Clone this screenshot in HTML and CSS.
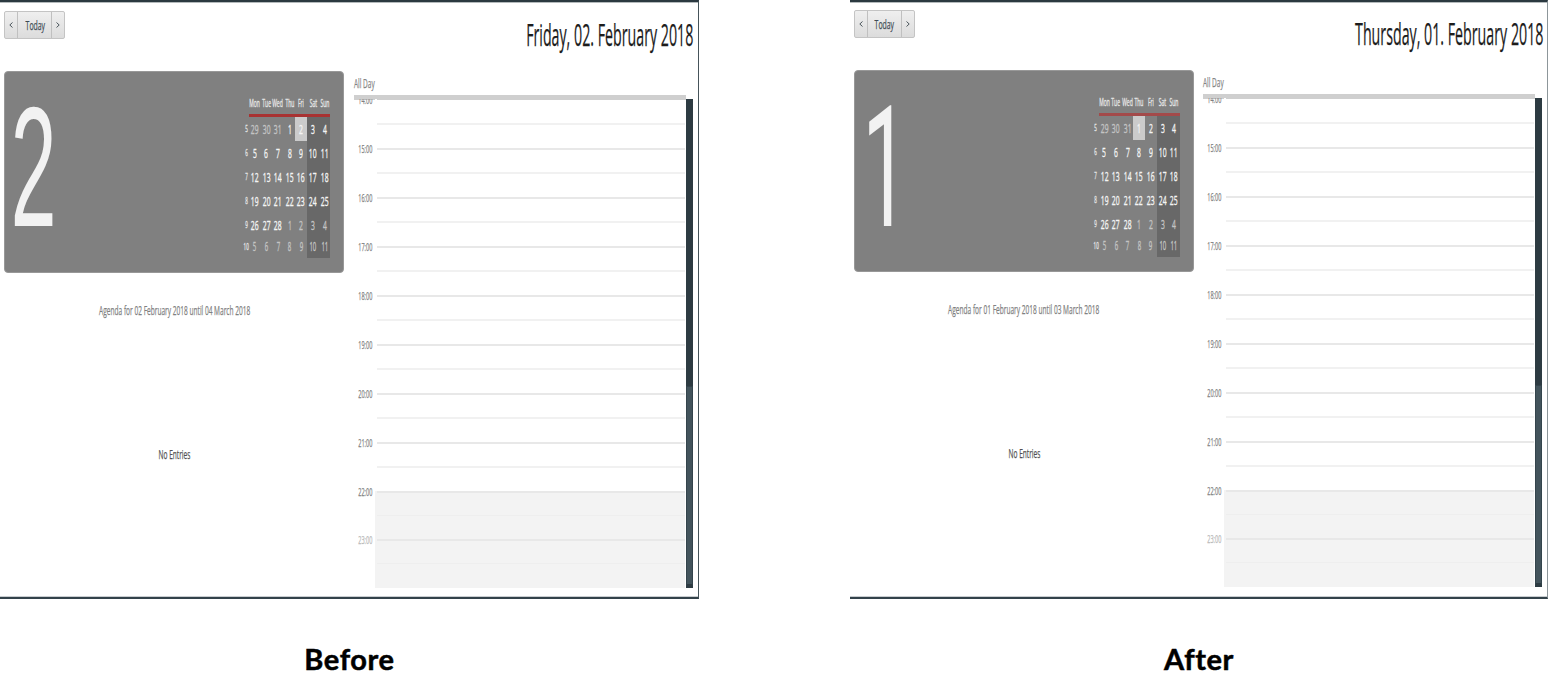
FILE: index.html
```html
<!DOCTYPE html>
<html lang="en">
<head>
<meta charset="utf-8">
<title>Calendar day view</title>
<link rel="stylesheet" href="styles.css">
</head>
<body>
<main class="compare">
<figure class="side">
<section class="panel">
<div class="left">
<nav class="nav"><button class="btn arrow"><svg width="4" height="8" viewBox="0 0 4 8"><path d="M3.5 1.5 .8 4l2.7 2.5"/></svg></button><button class="btn today"><span class="t">Today</span></button><button class="btn arrow"><svg width="4" height="8" viewBox="0 0 4 8"><path d="M.5 1.5l2.7 2.5L.5 6.500"/></svg></button></nav>
<div class="card">
<div class="bigday"><span class="t">2</span></div>
<div class="month">
<div class="row head"><b></b><i><span class="t">Mon</span></i><i><span class="t">Tue</span></i><i><span class="t">Wed</span></i><i><span class="t">Thu</span></i><i><span class="t">Fri</span></i><i><span class="t">Sat</span></i><i><span class="t">Sun</span></i></div>
<div class="rule"></div>
<div class="row"><b><span class="t">5</span></b><i class="o"><span class="t">29</span></i><i class="o"><span class="t">30</span></i><i class="o"><span class="t">31</span></i><i><span class="t">1</span></i><i class="sel"><span class="t">2</span></i><i class="w"><span class="t">3</span></i><i class="w"><span class="t">4</span></i></div>
<div class="row"><b><span class="t">6</span></b><i><span class="t">5</span></i><i><span class="t">6</span></i><i><span class="t">7</span></i><i><span class="t">8</span></i><i><span class="t">9</span></i><i class="w"><span class="t">10</span></i><i class="w"><span class="t">11</span></i></div>
<div class="row"><b><span class="t">7</span></b><i><span class="t">12</span></i><i><span class="t">13</span></i><i><span class="t">14</span></i><i><span class="t">15</span></i><i><span class="t">16</span></i><i class="w"><span class="t">17</span></i><i class="w"><span class="t">18</span></i></div>
<div class="row"><b><span class="t">8</span></b><i><span class="t">19</span></i><i><span class="t">20</span></i><i><span class="t">21</span></i><i><span class="t">22</span></i><i><span class="t">23</span></i><i class="w"><span class="t">24</span></i><i class="w"><span class="t">25</span></i></div>
<div class="row"><b><span class="t">9</span></b><i><span class="t">26</span></i><i><span class="t">27</span></i><i><span class="t">28</span></i><i class="o"><span class="t">1</span></i><i class="o"><span class="t">2</span></i><i class="w o"><span class="t">3</span></i><i class="w o"><span class="t">4</span></i></div>
<div class="row last"><b><span class="t">10</span></b><i class="o"><span class="t">5</span></i><i class="o"><span class="t">6</span></i><i class="o"><span class="t">7</span></i><i class="o"><span class="t">8</span></i><i class="o"><span class="t">9</span></i><i class="w o"><span class="t">10</span></i><i class="w o"><span class="t">11</span></i></div>
</div>
</div>
<p class="agenda"><span class="t">Agenda for 02 February 2018 until 04 March 2018</span></p>
<p class="none"><span class="t">No Entries</span></p>
</div>
<div class="right">
<h1 class="title"><span class="t">Friday, 02. February 2018</span></h1>
<div class="allday"><span class="t">All Day</span></div>
<div class="divider"></div>
<div class="body">
<div class="hours">
<div class="hour"><span class="t">14:00</span><div class="slot"></div></div>
<div class="hour"><span class="t">15:00</span><div class="slot"></div></div>
<div class="hour"><span class="t">16:00</span><div class="slot"></div></div>
<div class="hour"><span class="t">17:00</span><div class="slot"></div></div>
<div class="hour"><span class="t">18:00</span><div class="slot"></div></div>
<div class="hour"><span class="t">19:00</span><div class="slot"></div></div>
<div class="hour"><span class="t">20:00</span><div class="slot"></div></div>
<div class="hour"><span class="t">21:00</span><div class="slot"></div></div>
<div class="hour off"><span class="t">22:00</span><div class="slot"></div></div>
<div class="hour off late"><span class="t">23:00</span><div class="slot"></div></div>
</div>
<div class="scroll"><div class="thumb"></div></div>
</div>
</div>
</section>
<figcaption>Before</figcaption>
</figure>
<figure class="side after">
<section class="panel">
<div class="left">
<nav class="nav"><button class="btn arrow"><svg width="4" height="8" viewBox="0 0 4 8"><path d="M3.5 1.5 .8 4l2.7 2.5"/></svg></button><button class="btn today"><span class="t">Today</span></button><button class="btn arrow"><svg width="4" height="8" viewBox="0 0 4 8"><path d="M.5 1.5l2.7 2.5L.5 6.500"/></svg></button></nav>
<div class="card">
<div class="bigday"><span class="t">1</span></div>
<div class="month">
<div class="row head"><b></b><i><span class="t">Mon</span></i><i><span class="t">Tue</span></i><i><span class="t">Wed</span></i><i><span class="t">Thu</span></i><i><span class="t">Fri</span></i><i><span class="t">Sat</span></i><i><span class="t">Sun</span></i></div>
<div class="rule"></div>
<div class="row"><b><span class="t">5</span></b><i class="o"><span class="t">29</span></i><i class="o"><span class="t">30</span></i><i class="o"><span class="t">31</span></i><i class="sel"><span class="t">1</span></i><i><span class="t">2</span></i><i class="w"><span class="t">3</span></i><i class="w"><span class="t">4</span></i></div>
<div class="row"><b><span class="t">6</span></b><i><span class="t">5</span></i><i><span class="t">6</span></i><i><span class="t">7</span></i><i><span class="t">8</span></i><i><span class="t">9</span></i><i class="w"><span class="t">10</span></i><i class="w"><span class="t">11</span></i></div>
<div class="row"><b><span class="t">7</span></b><i><span class="t">12</span></i><i><span class="t">13</span></i><i><span class="t">14</span></i><i><span class="t">15</span></i><i><span class="t">16</span></i><i class="w"><span class="t">17</span></i><i class="w"><span class="t">18</span></i></div>
<div class="row"><b><span class="t">8</span></b><i><span class="t">19</span></i><i><span class="t">20</span></i><i><span class="t">21</span></i><i><span class="t">22</span></i><i><span class="t">23</span></i><i class="w"><span class="t">24</span></i><i class="w"><span class="t">25</span></i></div>
<div class="row"><b><span class="t">9</span></b><i><span class="t">26</span></i><i><span class="t">27</span></i><i><span class="t">28</span></i><i class="o"><span class="t">1</span></i><i class="o"><span class="t">2</span></i><i class="w o"><span class="t">3</span></i><i class="w o"><span class="t">4</span></i></div>
<div class="row last"><b><span class="t">10</span></b><i class="o"><span class="t">5</span></i><i class="o"><span class="t">6</span></i><i class="o"><span class="t">7</span></i><i class="o"><span class="t">8</span></i><i class="o"><span class="t">9</span></i><i class="w o"><span class="t">10</span></i><i class="w o"><span class="t">11</span></i></div>
</div>
</div>
<p class="agenda"><span class="t">Agenda for 01 February 2018 until 03 March 2018</span></p>
<p class="none"><span class="t">No Entries</span></p>
</div>
<div class="right">
<h1 class="title"><span class="t">Thursday, 01. February 2018</span></h1>
<div class="allday"><span class="t">All Day</span></div>
<div class="divider"></div>
<div class="body">
<div class="hours">
<div class="hour"><span class="t">14:00</span><div class="slot"></div></div>
<div class="hour"><span class="t">15:00</span><div class="slot"></div></div>
<div class="hour"><span class="t">16:00</span><div class="slot"></div></div>
<div class="hour"><span class="t">17:00</span><div class="slot"></div></div>
<div class="hour"><span class="t">18:00</span><div class="slot"></div></div>
<div class="hour"><span class="t">19:00</span><div class="slot"></div></div>
<div class="hour"><span class="t">20:00</span><div class="slot"></div></div>
<div class="hour"><span class="t">21:00</span><div class="slot"></div></div>
<div class="hour off"><span class="t">22:00</span><div class="slot"></div></div>
<div class="hour off late"><span class="t">23:00</span><div class="slot"></div></div>
</div>
<div class="scroll"><div class="thumb"></div></div>
</div>
</div>
</section>
<figcaption>After</figcaption>
</figure>
</main>
</body>
</html>
```
FILE: styles.css
```css
* { box-sizing: border-box; }
body { margin: 0; background: #fff; font-family: "Open Sans", "Noto Sans", sans-serif; overflow: hidden; }
.compare { display: flex; justify-content: space-between; width: 1548px; height: 700px; }
.side { margin: 0; width: 699px; }
.after { width: 698px; }
.t { display: inline-block; flex: none; white-space: nowrap; transform: scaleX(.48); -webkit-text-stroke: .25px; }

.panel { display: flex; height: 599px; padding: 9px 5px 0 4.4px; border-top: 2px solid #2b3940; border-right: 1px solid #46545a; border-bottom: 2px solid #33424a; box-shadow: inset 0 1px #b4babc, inset 0 -1px #c9cdd0; }
.after .panel { padding: 9px 4px 0; border-right-color: #8d969a; }
.after .left, .after .right { margin-top: -1px; }
.left { width: 340px; flex: none; }

.nav { display: flex; width: 61px; height: 28px; border: 1px solid #c4c4c4; border-radius: 2px; background: linear-gradient(#efefef, #dcdcdc); }
.btn { display: flex; align-items: center; justify-content: center; width: 12px; padding: 0; border: 0; background: none; color: #3f4c54; font: 13px "Open Sans", sans-serif; }
.btn svg { fill: none; stroke: #4a555b; stroke-width: 1; }
.today { width: 35px; border: solid #c0c0c0; border-width: 0 1px; }
.today .t { transform: scaleX(.53); }

.card { display: flex; justify-content: space-between; height: 202px; margin-top: 32px; padding: 24px 13px 0 0; border: 1px solid #989898; border-radius: 4px; background: #808080; }
.bigday { display: flex; justify-content: center; width: 57px; height: 142px; color: #f2f2f2; font: 171px/141px "Liberation Sans", Arial, sans-serif; }
.bigday .t { -webkit-text-stroke: 0; }
.after .bigday { width: 61px; font: 168px/147px Roboto, sans-serif; }

.month { width: 86.5px; }
.row { display: flex; height: 24.1px; color: #f5f5f5; font-size: 13.5px; }
.row b, .row i { display: flex; align-items: center; justify-content: center; font-weight: 400; font-style: normal; line-height: 22px; padding-bottom: 1px; }
.row b { width: 5px; font-size: 9px; color: #e4e4e4; }
.row i { width: 11.64px; }
.row .t { transform: scaleX(.5); -webkit-text-stroke: .35px; }
.head { height: 14px; margin-bottom: 4px; font-size: 10px; color: #e6e6e6; }
.rule { height: 3px; margin-left: 5px; background: #a83232; }
.after .rule { background: #a34a4a; }
.row .o { color: #c4c4c4; }
.row .w { background: #686868; }
.row .sel { background: #cbcbcb; }
.last { height: 21px; font-size: 12px; }

.agenda, .none { display: flex; justify-content: center; margin: 0; line-height: 20px; }
.agenda { margin-top: 27px; font-size: 13px; color: #808080; }
.agenda .t, .none .t { transform: scaleX(.505); }
.none { margin-top: 124px; font-size: 13px; color: #505050; }

.right { width: 340px; margin-left: 9.6px; }
.after .right { margin-left: 9px; }
.title { display: flex; justify-content: flex-end; height: 64px; margin: 0; padding-right: 1px; color: #1c1c1c; font-weight: 400; font-size: 31px; line-height: 47px; }
.after .title { padding-right: 0; }
.title .t { transform-origin: right; transform: scaleX(.459); }
.allday { height: 20px; color: #858585; font-size: 12.5px; line-height: 18px; }
.allday .t { transform-origin: left; transform: scaleX(.52); }
.divider { width: 332px; height: 5px; background: #cfcfcf; }
.body { display: flex; height: 489px; margin-top: -1px; }
.hours { width: 332px; overflow: hidden; }
.hour { display: flex; justify-content: flex-end; height: 48.95px; color: #808080; font-size: 11.5px; line-height: 16px; }
.hour .t { margin: -7px 3px 0 0; transform-origin: right; }
.slot { width: 310px; height: 48.95px; flex: none; margin-right: 1px; border-left: 2px solid #fff; background: linear-gradient(#e8e8e8 2px, transparent 2px 24.4px, #f1f1f1 24.4px 26.4px, transparent 26.4px); }
.hour:first-child .slot { background: linear-gradient(#cfcfcf 1px, transparent 1px 24.4px, #f1f1f1 24.4px 26.4px, transparent 26.4px); }
.off .slot { border-color: #f3f3f3; background-color: #f3f3f3; background-image: linear-gradient(#e8e8e8 2px, transparent 2px 24.4px, #eee 24.4px 25.4px, transparent 25.4px); }
.late { color: #b8b8b8; }
.scroll { display: flex; align-items: flex-end; width: 7px; background: #2d3b42; }
.thumb { width: 7px; height: 202px; border: 1px solid #34444c; border-bottom: 4px solid #2d3b42; background: #43545c; }

figcaption { margin-top: 41px; color: #000; text-align: center; font: 700 29px/38px Lato, sans-serif; letter-spacing: .6px; -webkit-text-stroke: .5px; }
```
